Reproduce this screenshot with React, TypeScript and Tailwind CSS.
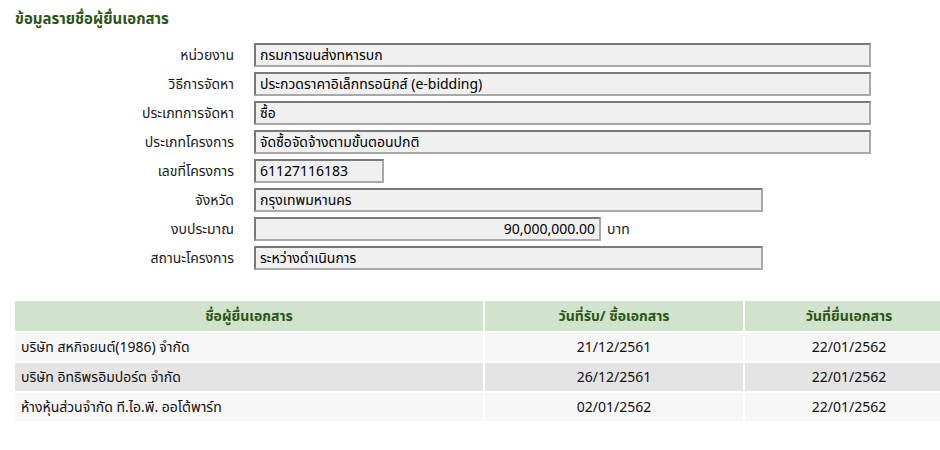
import React from "react";

const FIELDS = [
    { label: "หน่วยงาน", value: "กรมการขนส่งทหารบก", width: "w-[617px]" },
    { label: "วิธีการจัดหา", value: "ประกวดราคาอิเล็กทรอนิกส์ (e-bidding)", width: "w-[617px]" },
    { label: "ประเภทการจัดหา", value: "ซื้อ", width: "w-[617px]" },
    { label: "ประเภทโครงการ", value: "จัดซื้อจัดจ้างตามขั้นตอนปกติ", width: "w-[617px]" },
    { label: "เลขที่โครงการ", value: "61127116183", width: "w-[130px]" },
    { label: "จังหวัด", value: "กรุงเทพมหานคร", width: "w-[509px]" },
    { label: "งบประมาณ", value: "90,000,000.00", width: "w-[347px]", right: true, unit: "บาท" },
    { label: "สถานะโครงการ", value: "ระหว่างดำเนินการ", width: "w-[509px]" },
];

const ROWS = [
    { name: "บริษัท สหกิจยนต์(1986) จำกัด", received: "21/12/2561", submitted: "22/01/2562" },
    { name: "บริษัท อิทธิพรอิมปอร์ต จำกัด", received: "26/12/2561", submitted: "22/01/2562" },
    { name: "ห้างหุ้นส่วนจำกัด ที.ไอ.พี. ออโต้พาร์ท", received: "02/01/2562", submitted: "22/01/2562" },
];

export default function App() {
    return (
        <div
            className="w-[940px] h-[450px] overflow-hidden bg-white text-[14px] text-[#111]"
            style={{ fontFamily: "Tahoma, 'Noto Sans Thai', 'Noto Sans', sans-serif" }}
        >
            {/* Title */}
            <h1 className="pl-[15px] pt-[9px] h-[43px] text-[15px] font-bold text-[#2b5514]">
                ข้อมูลรายชื่อผู้ยื่นเอกสาร
            </h1>

            {/* Project details */}
            <div className="flex flex-col gap-[5px]">
                {FIELDS.map((f) => (
                    <div key={f.label} className="flex items-center h-[24px]">
                        <div className="w-[234px] text-right text-[#1a1a1a]">{f.label}</div>
                        <div className="w-[20px]" />
                        <div
                            className={`${f.width} h-[24px] flex items-center px-[4px] bg-[#f0f0f0] border-2 border-t-[#7a7a7a] border-l-[#7a7a7a] border-b-[#a8a8a8] border-r-[#a8a8a8] text-[#000] ${f.right ? "justify-end" : ""}`}
                        >
                            {f.value}
                        </div>
                        {f.unit && <span className="ml-[6px] text-[#1a1a1a]">{f.unit}</span>}
                    </div>
                ))}
            </div>

            {/* Bidders table */}
            <div className="pl-[15px] pt-[31px]">
                <table className="w-[942px] border-separate border-spacing-[2px] -m-[2px]">
                    <thead>
                        <tr className="h-[30px] bg-[#d1e3cd] text-[#2b5514]">
                            <th className="w-[468px] font-bold">ชื่อผู้ยื่นเอกสาร</th>
                            <th className="w-[258px] font-bold">วันที่รับ/ ซื้อเอกสาร</th>
                            <th className="font-bold">วันที่ยื่นเอกสาร</th>
                        </tr>
                    </thead>
                    <tbody>
                        {ROWS.map((r, i) => (
                            <tr key={r.name} className={`h-[28px] ${i % 2 === 1 ? "bg-[#e4e4e4]" : "bg-[#f7f7f7]"}`}>
                                <td className="pl-[6px]">{r.name}</td>
                                <td className="text-center">{r.received}</td>
                                <td className="text-center">{r.submitted}</td>
                            </tr>
                        ))}
                    </tbody>
                </table>
            </div>
        </div>
    );
}
